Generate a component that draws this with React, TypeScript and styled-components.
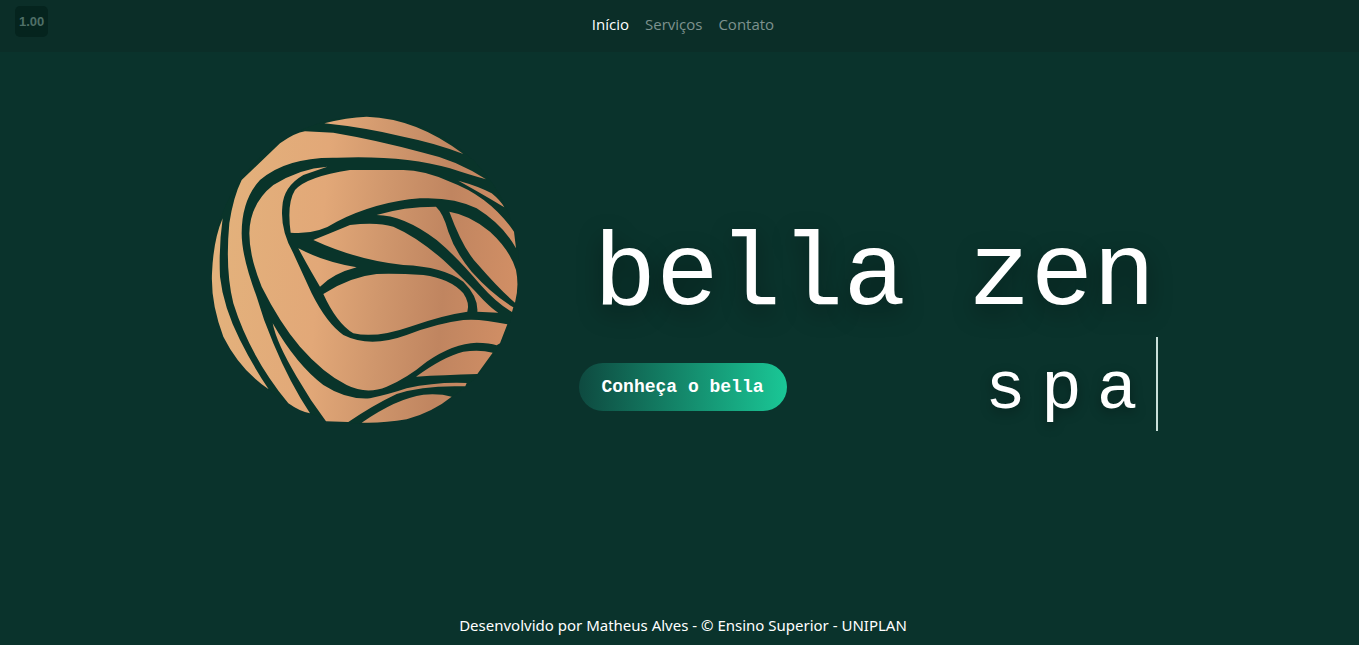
import React from "react";
import styled, { createGlobalStyle } from "styled-components";

const Global = createGlobalStyle`
  * { box-sizing: border-box; }
  body {
    margin: 0;
    background: #0a332c;
    color: #fff;
    font-family: "Open Sans", "Noto Sans", sans-serif;
    font-size: 15px;
    line-height: 24px;
  }
`;

const Page = styled.div`
  display: flex;
  flex-direction: column;
  min-height: 100vh;
`;

const Badge = styled.div`
  position: absolute;
  top: 6px;
  left: 15px;
  padding: 0 4px;
  border-radius: 5px;
  background: #05241e;
  color: #4f6f67;
  font: bold 13px/31px "Liberation Sans", Arial, sans-serif;
`;

const Navbar = styled.nav`
  display: flex;
  justify-content: center;
  gap: 16px;
  height: 52px;
  padding: 12px 0 0 7px;
  background: #0b2e28;
`;

const NavLink = styled.a<{ $active?: boolean }>`
  color: ${(p) => (p.$active ? "#fff" : "#7d928e")};
  text-decoration: none;
`;

const Hero = styled.main`
  flex: 1;
  display: flex;
  justify-content: center;
  align-items: flex-start;
  gap: 39px;
  padding: 28px 12px 0 0;
`;

const Logo = styled.svg`
  flex: none;
  width: 350px;
  height: 350px;
  margin-top: 10px;
`;

const Intro = styled.section`
  width: 579px;
  padding-top: 135px;
`;

const Title = styled.h1`
  margin: 0;
  padding-right: 2px;
  font: 400 104px/122px "Liberation Mono", monospace;
  text-align: right;
  white-space: nowrap;
  text-shadow: 0 8px 24px rgba(0, 0, 0, 0.4);
`;

const Row = styled.div`
  display: flex;
  justify-content: space-between;
  align-items: flex-start;
`;

const CallButton = styled.button`
  height: 48px;
  margin-top: 26px;
  padding: 0 23px;
  border: 0;
  border-radius: 24px;
  background: linear-gradient(90deg, #0e4a40, #1ac796);
  color: #fff;
  font: bold 18px/24px "Liberation Mono", monospace;
  cursor: pointer;
`;

const Typed = styled.p`
  margin: 0;
  padding: 12px 3px 0 0;
  border-right: 2px solid #c9e0da;
  font: 400 68px/82px "Liberation Mono", monospace;
  letter-spacing: 15px;
  text-shadow: 0 4px 12px rgba(0, 0, 0, 0.35);
`;

const Footer = styled.footer`
  padding: 0 0 8px 7px;
  font-family: "Noto Sans", "Open Sans", sans-serif;
  text-align: center;
`;

/* Each entry is one petal of the rose. */
const petals = [
  "M403 100Q470 82 530 80Q680 85 820 192Q740 160 640 140Q520 112 403 100Z",
  "M888 268Q800 210 700 188Q560 150 430 128L345 124Q315 128 270 160L155 270Q130 320 118 400Q105 540 130 640Q180 800 295 940Q330 965 360 970Q300 880 250 760Q220 690 200 620Q155 500 155 430Q155 330 210 270Q290 200 440 203Q640 195 780 235Q840 255 888 268Z",
  "M98 385Q70 450 66 550Q62 640 100 740Q150 840 236 898Q190 830 150 750Q100 650 90 560Q86 470 98 385Z",
  "M412 230Q330 235 250 285Q180 340 178 430Q178 500 215 590Q270 700 330 770Q400 850 470 885Q530 915 590 890Q650 865 710 815Q790 760 860 758Q900 758 920 766L930 760L952 703Q870 685 820 690Q740 700 650 735Q540 775 460 735Q410 700 365 610L310 490Q270 420 277 350Q280 290 340 255Z",
  "M480 240Q350 260 315 300Q290 340 302 428Q380 435 440 395Q560 335 690 325Q790 320 860 355Q940 405 978 475L972 425Q900 320 780 275Q700 240 640 240Z",
  "M805 272Q870 290 905 310Q930 330 943 352Q900 325 805 272Z",
  "M560 375Q640 350 738 350Q760 370 775 425Q795 485 845 545Q905 612 970 652L966 666Q920 640 870 583Q800 500 740 450Q640 375 560 375Z",
  "M778 365Q840 375 900 425Q960 480 978 540Q988 590 975 638Q930 600 865 525Q820 480 778 365Z",
  "M370 450Q420 430 480 405Q560 395 610 410Q680 440 760 510Q830 575 880 630Q910 660 925 668L862 665Q865 620 820 575Q760 530 640 525Q500 510 370 450Z",
  "M325 475Q400 515 500 532Q430 550 390 590Q360 540 325 475Z",
  "M400 612Q480 560 560 552Q620 550 700 555Q780 565 820 610Q840 640 832 665Q760 675 660 710Q560 745 490 730Q440 700 400 612Z",
  "M678 860Q760 800 820 785Q870 778 908 788L862 852Q760 855 678 860Z",
  "M248 700Q320 825 400 885Q470 930 540 925Q600 912 650 895Q740 875 830 879L826 889Q700 885 620 912Q550 945 475 996L408 994Q360 930 320 860Q260 760 248 700Z",
  "M515 998Q620 925 700 914Q750 910 785 920Q730 965 650 988Q580 1000 515 998Z",
];

function BellaLogo() {
  return (
    <Logo viewBox="0 0 1050 1050" role="img" aria-label="Bella Zen">
      <defs>
        <linearGradient id="copper" gradientUnits="userSpaceOnUse" x1="66" x2="985" y1="480" y2="560">
          <stop offset="0" stopColor="#e3b27c" />
          <stop offset="0.35" stopColor="#e2a878" />
          <stop offset="0.56" stopColor="#cf966c" />
          <stop offset="0.76" stopColor="#c08560" />
          <stop offset="1" stopColor="#d28f65" />
        </linearGradient>
      </defs>
      <circle cx="526" cy="540" r="462" fill="#09342a" />
      {petals.map((d) => (
        <path key={d} d={d} fill="url(#copper)" />
      ))}
    </Logo>
  );
}

export default function App() {
  return (
    <Page>
      <Global />
      <Badge>1.00</Badge>
      <Navbar>
        <NavLink href="#inicio" $active>Início</NavLink>
        <NavLink href="#servicos">Serviços</NavLink>
        <NavLink href="#contato">Contato</NavLink>
      </Navbar>
      <Hero id="inicio">
        <BellaLogo />
        <Intro>
          <Title>bella zen</Title>
          <Row>
            <CallButton type="button">Conheça o bella</CallButton>
            <Typed>spa</Typed>
          </Row>
        </Intro>
      </Hero>
      <Footer>Desenvolvido por Matheus Alves - © Ensino Superior - UNIPLAN</Footer>
    </Page>
  );
}
